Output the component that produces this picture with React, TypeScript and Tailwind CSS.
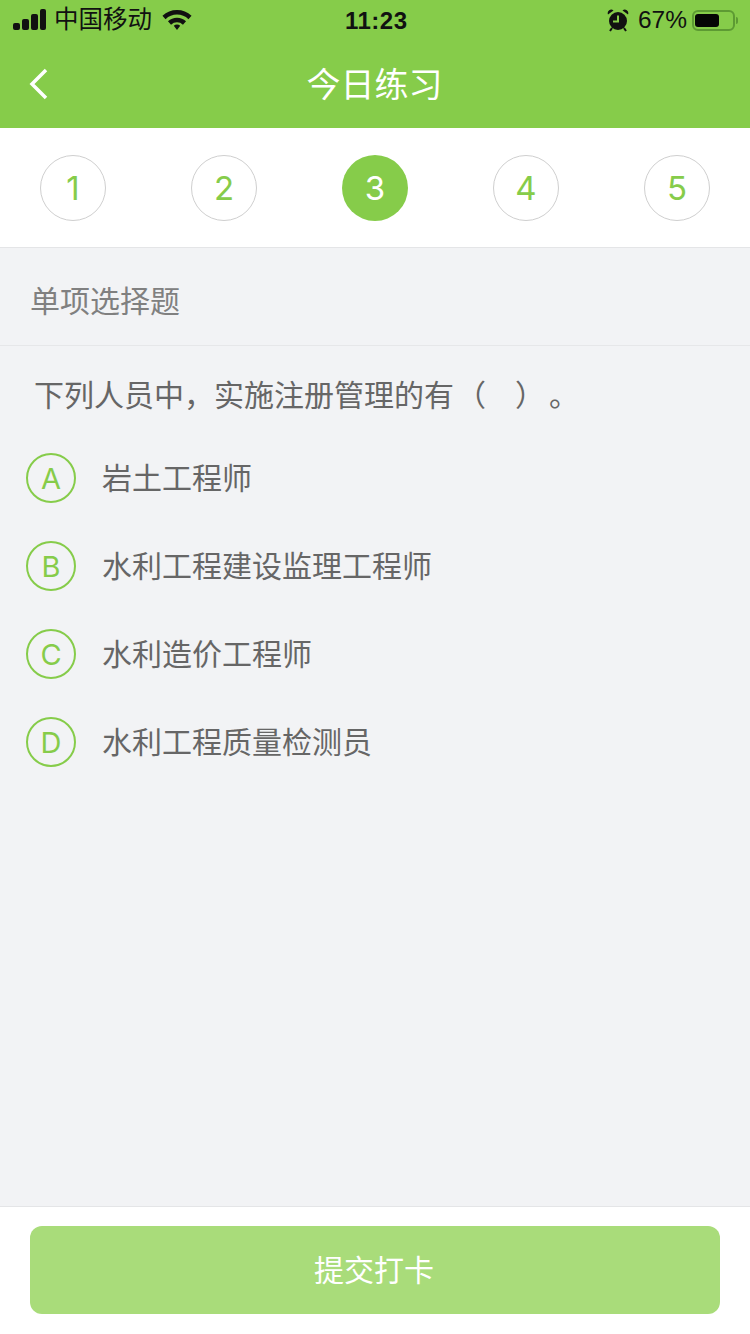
const font = { fontFamily: '"Liberation Sans", "Noto Sans CJK SC", sans-serif' };
const latin = { fontFamily: 'Inter, "Liberation Sans", sans-serif' };

const steps = [1, 2, 3, 4, 5];
const options = [
  { key: 'A', text: '岩土工程师' },
  { key: 'B', text: '水利工程建设监理工程师' },
  { key: 'C', text: '水利造价工程师' },
  { key: 'D', text: '水利工程质量检测员' },
];

function StatusBar() {
  return (
    <div className="relative flex h-10 items-center justify-between pl-[13px] pr-[12px] text-[#111]">
      <div className="flex items-center">
        <div className="flex items-end gap-[2px] pb-[1px]">
          <span className="h-[7px] w-[7px] rounded-[2px] bg-[#111]" />
          <span className="h-[11px] w-[7px] rounded-[2px] bg-[#111]" />
          <span className="h-[16px] w-[7px] rounded-[2px] bg-[#111]" />
          <span className="h-[21px] w-[6px] rounded-[2px] bg-[#111]" />
        </div>
        <span className="ml-[8px] text-[24.500px] leading-none">中国移动</span>
        <svg className="ml-[10px]" width="30" height="22" viewBox="0 0 30 22" fill="none" stroke="#111" strokeWidth="4.500">
          <path d="M2 8.500a19 19 0 0 1 26 0" />
          <path d="M7.500 14a11 11 0 0 1 15 0" />
          <path d="M15 15.500c1.200 0 2.300.4 3.200 1.200L15 21l-3.200-4.300c.9-.8 2-1.200 3.200-1.200z" fill="#111" stroke="none" />
        </svg>
      </div>
      <span className="absolute left-[345px] top-[8px] text-[24px] font-bold leading-[26px] tracking-[0.5px]">11:23</span>
      <div className="flex items-center">
        <svg width="22" height="24" viewBox="0 0 22 24" fill="#111">
          <circle cx="11" cy="13" r="9" />
          <path d="M1 6.500a3.500 3.500 0 0 1 5.500-4zM21 6.500a3.500 3.500 0 0 0-5.500-4z" />
          <path d="M11 7.500v6H6" fill="none" stroke="#86cc4a" strokeWidth="2" />
          <path d="M5 20l-2 3M17 20l2 3" stroke="#111" strokeWidth="2" />
        </svg>
        <span className="ml-[9px] text-[24.500px] leading-none">67%</span>
        <div className="ml-[5px] flex h-[21px] w-[43px] items-center rounded-[6px] border-2 border-[#5d9a33] px-[1px]">
          <div className="h-[13px] w-[24px] rounded-[3px] bg-[#050505]" />
        </div>
        <div className="ml-[1px] h-[7px] w-[2px] rounded-r-sm bg-[#5d9a33]" />
      </div>
    </div>
  );
}

export default function App() {
  return (
    <div className="flex h-[1334px] w-[750px] flex-col bg-[#f2f3f5]" style={font}>
      <div className="bg-[#86cc4a]">
        <StatusBar />
        <div className="relative flex h-[88px] items-center justify-center pt-[1px] pr-[1px]">
          <svg className="absolute left-[28px] top-[27px]" width="22" height="34" viewBox="0 0 22 34" fill="none" stroke="#fff" strokeWidth="3.500">
            <path d="M18 3L4 17l14 14" />
          </svg>
          <span className="text-[34px] leading-none text-white">今日练习</span>
        </div>
      </div>

      <div className="flex h-[120px] items-start justify-between border-b border-[#e4e5e7] bg-white px-10 pt-[27px]">
        {steps.map(n => (
          <div
            key={n}
            style={latin}
            className={
              n === 3
                ? 'flex h-[66px] w-[66px] items-center justify-center rounded-full bg-[#86cc4a] pt-[1px] text-[33px] text-white'
                : 'flex h-[66px] w-[66px] items-center justify-center rounded-full border border-[#cfcfcf] pt-[1px] text-[33px] text-[#86cc4a]'
            }
          >
            {n}
          </div>
        ))}
      </div>

      <div className="flex h-[98px] items-center border-b border-[#e6e7e9] pl-[30px] pt-[10px] text-[30px] text-[#808080]">
        单项选择题
      </div>

      <div className="flex flex-1 flex-col">
        <div className="pl-[34px] pt-[29px] text-[30px] leading-[42px] text-[#666]">
          下列人员中，实施注册管理的有
          <span className="ml-[2px]">（</span>
          <span className="ml-[29px]">）</span>
          <span className="ml-[19px]">。</span>
        </div>
        <div className="mt-[17px] flex flex-col">
          {options.map(o => (
            <div key={o.key} className="flex h-[88px] items-center pl-[26px]">
              <div
                style={latin}
                className="flex h-[50px] w-[50px] items-center justify-center rounded-full border-2 border-[#86cc4a] pt-[1px] text-[29px] text-[#86cc4a]"
              >
                {o.key}
              </div>
              <span className="ml-[26px] text-[30px] text-[#666]">{o.text}</span>
            </div>
          ))}
        </div>
      </div>

      <div className="h-[128px] border-t border-[#e4e5e7] bg-white px-[30px] pt-[19px]">
        <button className="flex h-[88px] w-[690px] items-center justify-center rounded-[12px] bg-[#a9dc7a] pr-[2px] text-[30px] text-white">
          提交打卡
        </button>
      </div>
    </div>
  );
}
